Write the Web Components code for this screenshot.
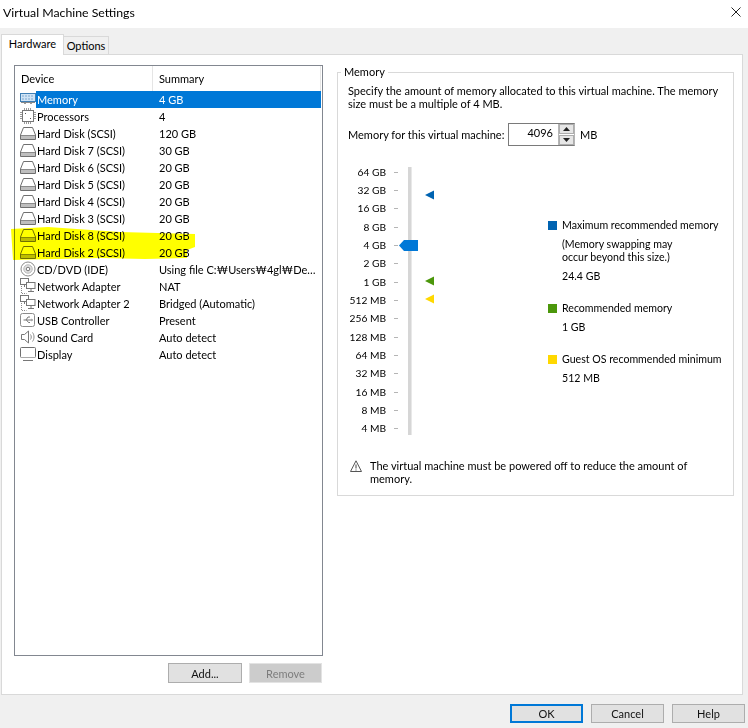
<!DOCTYPE html>
<html><head><meta charset="utf-8">
<style>
html,body{margin:0;padding:0;background:#f0f0f0}
body{font:11px/13px Lato,"Noto Sans CJK KR","Liberation Sans",sans-serif;color:#000}
</style></head>
<body>
<vm-dialog></vm-dialog>
<script>
const ICONS={
memory:'<rect x=".5" y="2.5" width="15" height="8" fill="#cfe3f5" stroke="#3f7fb5"/><path d="M2 5h12M2 8h12" stroke="#7fa9cf" stroke-dasharray="2 1"/><path d="M1 11.5h14" stroke="#8a8a8a"/><path d="M4 12.5h2M10 12.5h2" stroke="#9a9a9a"/>',
cpu:'<rect x="2.5" y="2.5" width="11" height="11" fill="#fff" stroke="#777"/><path d="M0 4.5h2M0 6.5h2M0 8.5h2M0 10.5h2M14 4.5h2M14 6.5h2M14 8.5h2M14 10.5h2M4.5 0v2M6.5 0v2M8.5 0v2M10.5 0v2M4.5 14v2M6.5 14v2M8.5 14v2M10.5 14v2" stroke="#999"/><path d="M5 5h1v1H5zM10 10h1v1h-1z" fill="#555"/>',
disk:'<path d="M3.5 2.5h9l3 7.5v4.5H.5V10z" fill="none" stroke="#6f6f6f"/><path d="M1 10.5h14" stroke="#8a8a8a"/><path d="M1 11h14v3H1z" fill="#a8a8a8" fill-opacity=".75"/>',
cd:'<circle cx="8" cy="8" r="7" fill="#fff" stroke="#8c8c8c"/><circle cx="8" cy="8" r="4.2" fill="#e4e4e4" stroke="#b5b5b5"/><circle cx="8" cy="8" r="1.8" fill="#fff" stroke="#777"/>',
net:'<rect x=".5" y=".5" width="8" height="6" fill="#fff" stroke="#777"/><rect x="6.5" y="4.5" width="8.5" height="6" fill="#fff" stroke="#777"/><path d="M4.5 7v2M11 11v2M8 13.5h6" stroke="#777" fill="none"/><path d="M1.5 8v7.5h5" stroke="#888" stroke-dasharray="1 1" fill="none"/>',
usb:'<rect x=".5" y="1.5" width="14" height="13" rx="2" fill="#fff" stroke="#8c8c8c"/><path d="M3.5 8h8M6 8l2-3h2M6.5 8l2 2.5h1.5" stroke="#777" fill="none"/><path d="M11.5 6.5 13 8l-1.5 1.5z" fill="#777"/>',
sound:'<path d="M1.5 5.5h3l4-3.5v12l-4-3.5h-3z" fill="#fff" stroke="#777"/><path d="M10.5 5.5c1 1.5 1 3.5 0 5M12.5 3.5c2 2.5 2 6.5 0 9" stroke="#8c8c8c" fill="none"/>',
display:'<rect x=".5" y="1.5" width="15" height="10" rx="1" fill="#fff" stroke="#6f6f6f"/><path d="M1 11h14v1H1z" fill="#aaa"/><path d="M3 14.5h10" stroke="#777"/>'
};
function def(name,render){
  customElements.define(name,class extends HTMLElement{
    constructor(){super();this.attachShadow({mode:'open'});}
    connectedCallback(){this.shadowRoot.innerHTML=render(this);}
  });
}
def('vm-button',()=>`<style>
:host{display:inline-flex;align-items:center;justify-content:center;box-sizing:border-box;width:74px;height:20px;background:#e1e1e1;border:1px solid #adadad;color:#111}
:host([disabled]){background:#cccccc;border-color:#e3e3e3;color:#7d7d7d;width:73px}
:host([primary]){border:2px solid #0078d7}
</style><slot></slot>`);

def('vm-titlebar',()=>`<style>
:host{display:flex;align-items:center;justify-content:space-between;height:28px;background:#fff;padding:0 7px 4px 3px;box-sizing:border-box;font-size:12.3px}
svg{display:block}
</style><span>Virtual Machine Settings</span>
<svg width="10" height="10" viewBox="0 0 10 10"><path d="M.5.5l9 9M9.5.5l-9 9" stroke="#222" fill="none"/></svg>`);

def('vm-tabs',()=>`<style>
:host{display:flex;align-items:flex-end;height:26px;padding-left:1px;box-sizing:border-box;position:relative;z-index:1}
.t{box-sizing:border-box;display:flex;align-items:center;justify-content:center;border:1px solid #d9d9d9;border-bottom:0}
.a{width:63px;background:#fff;margin-bottom:-1px;height:21px;padding-bottom:4px}
.b{width:45px;height:18px;background:#f0f0f0;border-left:0}
</style><div class="t a">Hardware</div><div class="t b">Options</div>`);

def('device-row',h=>`<style>
:host{display:grid;grid-template-columns:21px 1fr;height:17px;line-height:17px;white-space:nowrap;margin-right:1px}
i{display:block;padding:0 0 0 5px;height:16px}
svg{display:block}
.w{display:grid;grid-template-columns:123px 1fr}
:host([selected]) .w{background:#0078d7;color:#fff}
.cell{padding-left:1px;overflow:hidden}
</style><i><svg width="16" height="16" viewBox="0 0 16 16">${ICONS[h.getAttribute('icon')]}</svg></i>
<div class="w"><span class="cell">${h.getAttribute('name')}</span><span>${h.getAttribute('summary')}</span></div>`);

def('device-list',()=>{
 const rows=[['memory','Memory','4 GB'],['cpu','Processors','4'],['disk','Hard Disk (SCSI)','120 GB'],['disk','Hard Disk 7 (SCSI)','30 GB'],['disk','Hard Disk 6 (SCSI)','20 GB'],['disk','Hard Disk 5 (SCSI)','20 GB'],['disk','Hard Disk 4 (SCSI)','20 GB'],['disk','Hard Disk 3 (SCSI)','20 GB'],['disk','Hard Disk 8 (SCSI)','20 GB'],['disk','Hard Disk 2 (SCSI)','20 GB'],['cd','CD/DVD (IDE)','Using file C:₩Users₩4gl₩De…'],['net','Network Adapter','NAT'],['net','Network Adapter 2','Bridged (Automatic)'],['usb','USB Controller','Present'],['sound','Sound Card','Auto detect'],['display','Display','Auto detect']];
 return `<style>
:host{display:block;position:relative;flex:1;box-sizing:border-box;background:#fff;border:1px solid #828790}
.h{display:grid;grid-template-columns:138px 168px 1fr;height:25px}
.h div{display:flex;align-items:center;padding-left:6px;box-sizing:border-box;border-right:1px solid #e5e5e5}
.h div:last-child{border:0;padding:0}
svg.y{position:absolute;left:-15px;top:-66px;width:748px;height:728px;mix-blend-mode:multiply;pointer-events:none}
</style><div class="h"><div>Device</div><div>Summary</div><div></div></div>
${rows.map((r,i)=>`<device-row icon="${r[0]}" name="${r[1]}" summary="${r[2]}"${i==0?' selected':''}></device-row>`).join('')}
<svg class="y" viewBox="0 0 748 728"><polygon fill="#ffff00" points="11,229 48,227 120,232 195,234 195,247 187,250 187,258 145,259 100,258 13,260"/></svg>`});

def('memory-scale',()=>{
 const L=['64 GB','32 GB','16 GB','8 GB','4 GB','2 GB','1 GB','512 MB','256 MB','128 MB','64 MB','32 MB','16 MB','8 MB','4 MB'];
 const m=(y,c)=>`<svg class="m" style="top:${y}px" width="10" height="10" viewBox="0 0 10 10"><path d="M0 5 9 .5v9z" fill="${c}"/></svg>`;
 return `<style>
:host{display:block;position:relative;width:87px;height:275px;flex:none}
.r{display:flex;height:18.35px;align-items:center}
.l{width:38px;text-align:right;white-space:nowrap;font-size:10.2px}
.k{width:4px;height:1px;background:#b5b5b5;margin-left:8px}
.track{position:absolute;left:60px;top:4px;width:3px;height:268px;background:#d6d6d6;border-right:1px solid #e8e8e8}
.thumb{position:absolute;left:51px;top:77px}
.m{position:absolute;left:77px}
</style>${L.map(t=>`<div class="r"><span class="l">${t}</span><span class="k"></span></div>`).join('')}
<div class="track"></div>
<svg class="thumb" width="19" height="11" viewBox="0 0 19 11"><path d="M0 5.5 5 0h14v11H5z" fill="#0078d7"/></svg>
${m(27,'#0063b1')}${m(113,'#4b970b')}${m(131,'#ffd800')}`});

def('memory-legend',()=>`<style>
:host{display:block;margin:56px 0 0 113px;white-space:nowrap;font-size:10.6px}
.i{display:flex;align-items:center;gap:5px}
.d{margin-left:14px;margin-top:6px}
.sq{width:9px;height:9px;background:var(--c);flex:none}
.s{margin-top:19px}
</style>
<div class="i" style="--c:#0063b1"><span class="sq"></span>Maximum recommended memory</div>
<div class="d">(Memory swapping may<br>occur beyond this size.)</div>
<div class="d">24.4 GB</div>
<div class="i s" style="--c:#4b970b"><span class="sq"></span>Recommended memory</div>
<div class="d">1 GB</div>
<div class="i s" style="--c:#ffd800"><span class="sq"></span>Guest OS recommended minimum</div>
<div class="d">512 MB</div>`);

def('memory-spin',()=>`<style>
:host{display:inline-flex;box-sizing:border-box;width:67px;height:23px;border:1px solid #7a7a7a;border-right:1px solid #b5b5b5;background:#fff;margin:0 5px 0 0;flex:none}
.v{flex:1;text-align:right;padding:2px 5px 0 0}
.b{width:16px;display:flex;flex-direction:column;border-left:1px solid #b5b5b5;gap:1px;box-sizing:border-box}
.b div{flex:1;background:#e6e6e6;border:1px solid #adadad;display:flex;align-items:center;justify-content:center}
.b svg{display:block}
</style><span class="v">4096</span><span class="b"><div><svg width="7" height="4"><path d="M3.5 0 7 4H0z" fill="#222"/></svg></div><div><svg width="7" height="4"><path d="M0 0h7L3.5 4z" fill="#222"/></svg></div></span>`);

def('memory-group',()=>`<style>
:host{display:block;width:397px;margin-top:-1px;flex:none}
fieldset{margin:0;min-width:0;box-sizing:border-box;height:432px;border:1px solid #d9d9d9;padding:4px 10px 0 10px;display:block}
legend{padding:0 3px;margin-left:-7px;height:16px;line-height:16px}
.row{display:flex;align-items:center;margin-top:13px;height:23px}
.row .lab{width:160px;white-space:nowrap;flex:none}
.mid{display:flex;margin-top:17px;height:275px}
.warn{display:flex;gap:8px;margin-top:21px;margin-left:2px}
.warn svg{flex:none;margin-top:1px}
.nw{white-space:nowrap}
</style><fieldset><legend>Memory</legend>
<div class="nw">Specify the amount of memory allocated to this virtual machine. The memory<br>size must be a multiple of 4 MB.</div>
<div class="row"><span class="lab">Memory for this virtual machine:</span><memory-spin></memory-spin><span>MB</span></div>
<div class="mid"><memory-scale></memory-scale><memory-legend></memory-legend></div>
<div class="warn"><svg width="12" height="12" viewBox="0 0 12 12"><path d="M6 .8 11.5 11.5H.5z" fill="#fff" stroke="#555"/><path d="M6 4.5v4M6 9.5v1" stroke="#444"/></svg><div class="nw">The virtual machine must be powered off to reduce the amount of<br>memory.</div></div>
</fieldset>`);

def('vm-dialog',()=>`<style>
:host{display:flex;flex-direction:column;height:728px;width:748px;background:#f0f0f0}
.panel{flex:1;margin:0 5px 0 1px;background:#fff;border:1px solid #d9d9d9;box-sizing:border-box;padding:10px 9px 11px 12px;display:flex;gap:14px;min-height:0}
.left{width:309px;display:flex;flex-direction:column;flex:none}
.btns{display:flex;justify-content:flex-end;gap:7px;margin-top:7px;padding-right:1px}
.foot{height:33px;display:flex;justify-content:flex-end;align-items:flex-start;gap:8px;padding:9px 3px 0 0;box-sizing:border-box}
.foot vm-button{width:73px;height:19px}
</style><vm-titlebar></vm-titlebar><vm-tabs></vm-tabs>
<div class="panel"><div class="left"><device-list></device-list><div class="btns"><vm-button>Add...</vm-button><vm-button disabled>Remove</vm-button></div></div><memory-group></memory-group></div>
<div class="foot"><vm-button primary>OK</vm-button><vm-button>Cancel</vm-button><vm-button>Help</vm-button></div>`);
</script>
</body></html>
